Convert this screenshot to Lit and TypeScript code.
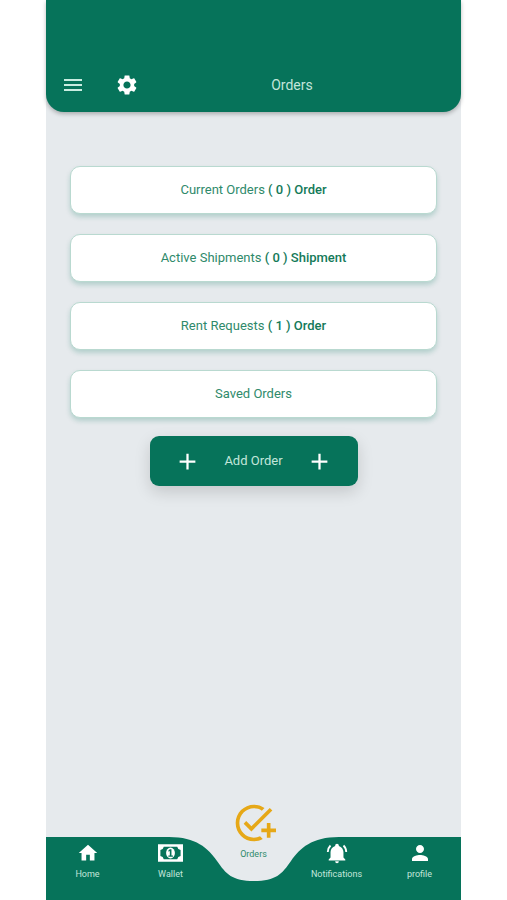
import { LitElement, html, css, svg, nothing } from "lit";
import { customElement } from "lit/decorators.js";
import { classMap } from "lit/directives/class-map.js";

const icons = {
  menu: "M3 18h18v-2H3v2zm0-5h18v-2H3v2zm0-7v2h18V6H3z",
  gear: "M19.14 12.94c.04-.3.06-.61.06-.94 0-.32-.02-.64-.07-.94l2.03-1.58c.18-.14.23-.41.12-.61l-1.92-3.32c-.12-.22-.37-.29-.59-.22l-2.39.96c-.5-.38-1.03-.7-1.62-.94l-.36-2.54c-.04-.24-.24-.41-.48-.41h-3.84c-.24 0-.43.17-.47.41l-.36 2.54c-.59.24-1.13.57-1.62.94l-2.39-.96c-.22-.08-.47 0-.59.22L2.74 8.87c-.12.21-.08.47.12.61l2.03 1.58c-.05.3-.09.63-.09.94s.02.64.07.94l-2.03 1.58c-.18.14-.23.41-.12.61l1.92 3.32c.12.22.37.29.59.22l2.39-.96c.5.38 1.03.7 1.62.94l.36 2.54c.05.24.24.41.48.41h3.84c.24 0 .44-.17.47-.41l.36-2.54c.59-.24 1.13-.56 1.62-.94l2.39.96c.22.08.47 0 .59-.22l1.92-3.32c.12-.22.07-.47-.12-.61l-2.01-1.58zM12 15.6c-1.98 0-3.6-1.62-3.6-3.6s1.62-3.6 3.6-3.6 3.6 1.62 3.6 3.6-1.62 3.6-3.6 3.6z",
  plus: "M19 13h-6v6h-2v-6H5v-2h6V5h2v6h6v2z",
  home: "M10 20v-6h4v6h5v-8h3L12 3 2 12h3v8z",
  task: "M22 5.18L10.59 16.6l-4.24-4.24 1.41-1.41 2.83 2.83 10-10L22 5.18zM12 20c-4.41 0-8-3.59-8-8s3.59-8 8-8c1.57 0 3.04.46 4.28 1.25l1.45-1.45C16.1 2.67 14.13 2 12 2 6.48 2 2 6.48 2 12s4.48 10 10 10c1.73 0 3.36-.44 4.78-1.22l-1.5-1.5c-1 .46-2.11.72-3.28.72zm7-5h-3v2h3v3h2v-3h3v-2h-3v-3h-2v3z",
  bell: "M21 19v1H3v-1l2-2v-6c0-3.1 2.03-5.83 5-6.71V4a2 2 0 0 1 4 0v.29c2.97.88 5 3.61 5 6.71v6l2 2zm-7 2a2 2 0 0 1-4 0h4zm5.75-17.81l-1.42 1.42A9 9 0 0 1 21 11h2c0-2.930-1.160-5.750-3.250-7.810zM1 11h2a9 9 0 0 1 2.670-6.390L4.250 3.190A11 11 0 0 0 1 11z",
  person: "M12 12c2.21 0 4-1.79 4-4s-1.79-4-4-4-4 1.79-4 4 1.79 4 4 4zm0 2c-2.67 0-8 1.34-8 4v2h16v-2c0-2.66-5.33-4-8-4z",
};

const glyph = (d: string, viewBox = "0 0 24 24") =>
  html`<svg class="glyph" viewBox=${viewBox} aria-hidden="true">${svg`<path d=${d} />`}</svg>`;

const banknote = html`<svg class="note" viewBox="0 0 26 18" aria-hidden="true">
  <path fill-rule="evenodd" d="M0 0h26v18H0zM6 2.5Q5.500 5.500 2.500 6v6Q5.500 12.500 6 15.500h14Q20.500 12.500 23.500 12V6Q20.500 5.500 20 2.500z" />
  <ellipse cx="13" cy="9" rx="4.600" ry="5.600" />
  <path class="ink" d="M12.300 5h1.700v6.600h1.500V13h-4.700v-1.400h1.500V7l-1.400.6V6.100z" />
</svg>`;

@customElement("app-root")
export class AppRoot extends LitElement {
  static styles = css`
    :host {
      --green: #06735a;
      display: flex;
      flex-direction: column;
      min-height: 100vh;
      box-sizing: border-box;
      padding: 0 46px;
      background: #fff;
      font-family: Roboto, "Liberation Sans", sans-serif;
      font-size: 13px;
      line-height: 20px;
    }
    * { box-sizing: border-box; }
    button { font: inherit; border: 0; cursor: pointer; }
    .screen {
      flex: 1;
      display: flex;
      flex-direction: column;
      background: #e6eaed;
    }
    .glyph { display: block; width: 24px; height: 24px; fill: currentColor; }
    .bar {
      display: grid;
      grid-template-columns: 54px 54px 1fr;
      align-items: center;
      padding: 70px 31px 12px 0;
      background: var(--green);
      border-radius: 0 0 18px 18px;
      box-shadow: 0 2px 4px #0004;
      color: #fff;
    }
    .tool {
      display: grid;
      place-items: center;
      height: 30px;
      padding: 0;
      background: none;
      color: inherit;
    }
    .menu { color: #c9ede1; }
    h1 {
      margin: 0;
      font-size: 14px;
      font-weight: 400;
      text-align: center;
      color: #c3e6da;
    }
    main {
      flex: 1;
      display: flex;
      flex-direction: column;
      align-items: center;
      gap: 18px;
      padding: 54px 24px;
    }
    .cards {
      display: flex;
      flex-direction: column;
      gap: 20px;
      width: 100%;
    }
    .card {
      height: 48px;
      padding: 0 12px;
      background: #fff;
      border: 1px solid #b9d9d0;
      border-radius: 10px;
      box-shadow: 0 3px 5px #06735a38;
      color: #2f8a6b;
    }
    .card b { font-weight: 500; color: #147a59; }
    .add {
      display: flex;
      align-items: center;
      justify-content: space-between;
      width: 208px;
      height: 50px;
      padding: 0 24px;
      background: var(--green);
      border-radius: 9px;
      box-shadow: 0 6px 16px #00000026;
      color: #fff;
    }
    .add .glyph { width: 27px; height: 27px; }
    .add span { color: #c3e6da; }
    nav { position: relative; }
    .shape {
      position: absolute;
      inset: 0;
      display: flex;
    }
    .side { flex: 1; background: var(--green); }
    .dip { display: block; width: 170px; height: 100%; fill: var(--green); }
    ul {
      position: relative;
      display: grid;
      grid-template-columns: repeat(5, 1fr);
      height: 63px;
      margin: 0;
      padding: 4px 0 0;
      list-style: none;
    }
    a {
      display: flex;
      flex-direction: column;
      align-items: center;
      gap: 3px;
      font-size: 9px;
      line-height: 12px;
      text-decoration: none;
      color: #c3e6da;
    }
    a .glyph { color: #fff; }
    .note { display: block; width: 25px; height: 24px; fill: #fff; }
    .note .ink { fill: var(--green); }
    .current { margin-top: -40px; color: #2f8a6b; }
    .current .glyph { width: 44px; height: 44px; color: #e6a817; }
  `;

  private cards = [
    { label: "Current Orders", count: "( 0 ) Order" },
    { label: "Active Shipments", count: "( 0 ) Shipment" },
    { label: "Rent Requests", count: "( 1 ) Order" },
    { label: "Saved Orders", count: "" },
  ];

  private tabs = [
    { label: "Home", icon: glyph(icons.home, "-1 -1 26 26") },
    { label: "Wallet", icon: banknote },
    { label: "Orders", icon: glyph(icons.task), current: true },
    { label: "Notifications", icon: glyph(icons.bell, "-1 -1 26 26") },
    { label: "profile", icon: glyph(icons.person) },
  ];

  render() {
    return html`<div class="screen">
      <header class="bar">
        <button class="tool menu" aria-label="Menu">${glyph(icons.menu)}</button>
        <button class="tool" aria-label="Settings">${glyph(icons.gear)}</button>
        <h1>Orders</h1>
      </header>
      <main>
        <div class="cards">
          ${this.cards.map(
            (c) => html`<button class="card">${c.label}${c.count ? html` <b>${c.count}</b>` : nothing}</button>`
          )}
        </div>
        <button class="add">${glyph(icons.plus)}<span>Add Order</span>${glyph(icons.plus)}</button>
      </main>
      <nav>
        <div class="shape">
          <div class="side"></div>
          <svg class="dip" viewBox="0 0 170 63" preserveAspectRatio="none" aria-hidden="true">
            <path d="M0 0C27 0 39 11 48 24S63 44 85 44S113 37 122 24S143 0 170 0V63H0z" />
          </svg>
          <div class="side"></div>
        </div>
        <ul>
          ${this.tabs.map(
            (t) => html`<li><a href="#${t.label}" class=${classMap({ current: !!t.current })}>${t.icon}${t.label}</a></li>`
          )}
        </ul>
      </nav>
    </div>`;
  }
}
